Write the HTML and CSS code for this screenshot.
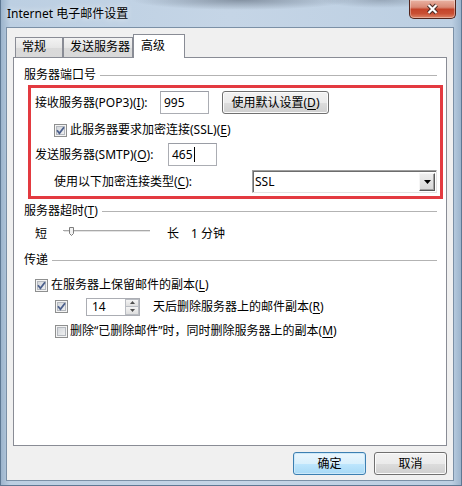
FILE: index.html
```html
<!DOCTYPE html>
<html lang="zh-CN">
<head>
    <meta charset="UTF-8">
    <title>Internet 电子邮件设置</title>
    <link rel="stylesheet" href="styles.css">
</head>
<body>
<div class="window">
    <div class="titlebar">
        <span class="title">Internet 电子邮件设置</span>
        <div class="close">
            <svg width="13" height="12" viewBox="0 0 13 12">
                <path d="M2.5 2 L10.5 10 M10.5 2 L2.5 10" stroke="#4a2b25" stroke-width="4.2"/>
                <path d="M2.5 2 L10.5 10 M10.5 2 L2.5 10" stroke="#fff" stroke-width="2.2"/>
            </svg>
        </div>
    </div>
    <div class="client">
        <ul class="tabs">
            <li class="tab-general">常规</li>
            <li class="tab-send">发送服务器</li>
            <li class="tab-adv active">高级</li>
        </ul>
        <div class="panel">
            <div class="group g-port"><span>服务器端口号</span></div>
            <div class="mark">
                <div class="row row-pop">
                    <span class="label w-pop">接收服务器(POP3)(<u>I</u>):</span>
                    <span class="edit">995</span>
                    <span class="button btn-reset">使用默认设置(<u>D</u>)</span>
                </div>
                <div class="row row-ssl">
                    <span class="check"><svg width="9" height="9" viewBox="0 0 9 9"><path d="M1 4.3 L3.4 7.2 L8 1.2" fill="none" stroke="#4b5f8c" stroke-width="1.8"/></svg></span>
                    <span class="check-text">此服务器要求加密连接(SSL)(<u>E</u>)</span>
                </div>
                <div class="row row-smtp">
                    <span class="label w-smtp">发送服务器(SMTP)(<u>O</u>):</span>
                    <span class="edit">465<i class="caret"></i></span>
                </div>
                <div class="row row-type">
                    <span class="label w-type">使用以下加密连接类型(<u>C</u>):</span>
                    <span class="combo">
                        <span>SSL</span>
                        <span class="drop"><svg width="7" height="4" viewBox="0 0 7 4"><path d="M0 0 H7 L3.5 4 Z" fill="#000"/></svg></span>
                    </span>
                </div>
            </div>
            <div class="group g-timeout"><span>服务器超时(<u>T</u>)</span></div>
            <div class="row row-slider">
                <span>短</span>
                <svg class="slider" width="88" height="16" viewBox="0 0 88 16">
                    <line x1="0" y1="4.5" x2="87" y2="4.5" stroke="#a9a9a9"/>
                    <line x1="1" y1="5.5" x2="87" y2="5.5" stroke="#e3e3e3"/>
                    <path d="M6.5 1.5 H10.5 V7.5 L8.5 9.5 L6.5 7.5 Z" fill="#f2f2f2" stroke="#7d7d7d"/>
                </svg>
                <span class="long">长</span>
                <span class="minutes">1 分钟</span>
            </div>
            <div class="group g-deliver"><span>传递</span></div>
            <div class="row row-keep">
                <span class="check"><svg width="9" height="9" viewBox="0 0 9 9"><path d="M1 4.3 L3.4 7.2 L8 1.2" fill="none" stroke="#4b5f8c" stroke-width="1.8"/></svg></span>
                <span class="check-text">在服务器上保留邮件的副本(<u>L</u>)</span>
            </div>
            <div class="row row-days">
                <span class="check"><svg width="9" height="9" viewBox="0 0 9 9"><path d="M1 4.3 L3.4 7.2 L8 1.2" fill="none" stroke="#4b5f8c" stroke-width="1.8"/></svg></span>
                <span class="spin">
                    <span class="spin-val">14</span>
                    <span class="spin-btns">
                        <span class="spin-up"><svg width="5" height="3" viewBox="0 0 5 3"><path d="M0 3 H5 L2.5 0 Z" fill="#4d4d4d"/></svg></span>
                        <span class="spin-down"><svg width="5" height="3" viewBox="0 0 5 3"><path d="M0 0 H5 L2.5 3 Z" fill="#4d4d4d"/></svg></span>
                    </span>
                </span>
                <span class="days-text">天后删除服务器上的邮件副本(<u>R</u>)</span>
            </div>
            <div class="row row-del">
                <span class="check"></span>
                <span class="check-text tight">删除“已删除邮件”时，同时删除服务器上的副本(<u>M</u>)</span>
            </div>
        </div>
        <div class="footer">
            <span class="button btn-ok">确定</span>
            <span class="button btn-cancel">取消</span>
        </div>
    </div>
</div>
</body>
</html>
```

FILE: styles.css
```css
*{
    margin:0;
    padding:0;
}
body{
    font-family: "Noto Sans", "Noto Sans CJK SC", sans-serif;
    font-size:12px;
    line-height:16px;
    color:#000;
}
li{
    list-style:none;
}
u{
    text-decoration:underline;
    text-underline-offset:2px;
}

/* window frame */
.window{
    width:462px;
    height:486px;
    box-sizing:border-box;
    display:flex;
    flex-direction:column;
    border:1px solid #5e7893;
    border-top:none;
    background:linear-gradient(to right, #9cb4cc, #bccfe2 2%, #c5d5e6 50%, #bccfe2 98%, #9cb4cc);
}
.titlebar{
    height:27px;
    display:flex;
    justify-content:space-between;
    background:
        radial-gradient(ellipse 110px 10px at 240px 0, rgba(80,92,108,0.55), rgba(80,92,108,0)),
        radial-gradient(ellipse 60px 8px at 380px 0, rgba(80,92,108,0.35), rgba(80,92,108,0));
}
.title{
    padding-left:6px;
    line-height:27px;
    text-shadow:0 0 6px rgba(255,255,255,0.9);
}
.close{
    width:47px;
    height:19px;
    box-sizing:border-box;
    margin-right:5px;
    border:1px solid #52241b;
    border-top:none;
    border-radius:0 0 5px 5px;
    background:linear-gradient(#eab3a3, #d98a76 40%, #c4442a 52%, #c94f33 75%, #dd8466);
    box-shadow:inset 0 0 0 1px rgba(255,255,255,0.35);
    display:flex;
    align-items:center;
    justify-content:center;
}
.client{
    flex:1;
    margin:0 7px 4px 5px;
    border:1px solid #7b90a6;
    background:#f0f0f0;
    display:flex;
    flex-direction:column;
}

/* tabs */
.tabs{
    display:flex;
    align-items:flex-end;
    height:23px;
    margin:6px 0 0 8px;
}
.tabs li{
    box-sizing:border-box;
    height:20px;
    padding-left:6px;
    line-height:18px;
    border:1px solid #898c95;
    border-bottom:none;
    background:linear-gradient(#f3f3f3, #e6e6e6 50%, #dadada 51%, #d9d9d9);
}
.tab-general{
    width:48px;
}
.tab-send{
    width:70px;
}
.tabs li.tab-adv{
    width:52px;
    height:24px;
    margin-bottom:-1px;
    padding-left:7px;
    line-height:22px;
    background:#fff;
    position:relative;
}
.panel{
    flex:1;
    margin:0 6px;
    padding:0 3px 0 10px;
    border:1px solid #898c95;
    background:#fff;
}

/* group headings */
.group{
    display:flex;
    align-items:center;
    height:16px;
    margin-right:6px;
}
.group::after{
    content:"";
    flex:1;
    height:1px;
    margin-left:4px;
    background:#b3b3b3;
}
.g-port{
    margin-top:9px;
}
.g-timeout{
    margin-top:4px;
}
.g-deliver{
    margin-top:10px;
}

/* red highlight */
.mark{
    box-sizing:border-box;
    height:114px;
    margin:2px 0 0 4px;
    padding:3px 0 0 4px;
    border:3px solid #e33a40;
}

.row{
    display:flex;
    align-items:center;
}
.label{
    flex:none;
}
.row-pop{
    height:23px;
}
.w-pop{
    width:125px;
}
.row-ssl{
    height:16px;
    margin-top:8px;
    padding-left:19px;
}
.row-smtp{
    height:23px;
    margin-top:5px;
}
.w-smtp{
    width:133px;
}
.row-type{
    height:23px;
    margin-top:4px;
    padding-left:19px;
}
.w-type{
    width:198px;
}

/* controls */
.edit{
    box-sizing:border-box;
    width:49px;
    height:23px;
    padding-left:3px;
    border:1px solid #abadb3;
    border-top-color:#9a9da5;
    background:#fff;
    display:flex;
    align-items:center;
}
.caret{
    width:1px;
    height:15px;
    margin-left:1px;
    background:#000;
}
.button{
    box-sizing:border-box;
    height:23px;
    border:1px solid #707070;
    border-radius:3px;
    background:linear-gradient(#f2f2f2, #ebebeb 50%, #dddddd 51%, #cfcfcf);
    box-shadow:inset 0 0 0 1px #fbfbfb;
    display:flex;
    align-items:center;
    justify-content:center;
}
.btn-reset{
    width:107px;
    margin-left:13px;
}
.check{
    box-sizing:border-box;
    width:13px;
    height:13px;
    flex:none;
    border:1px solid #8e8f8f;
    background:linear-gradient(135deg, #cdd1d6, #f6f6f6);
    box-shadow:inset 0 0 0 1px #f4f4f4, inset 0 0 0 2px #b4b8be;
    display:flex;
    align-items:center;
    justify-content:center;
}
.check-text{
    margin-left:3px;
}
.check-text.tight{
    margin-left:2px;
}
.combo{
    box-sizing:border-box;
    width:185px;
    height:23px;
    padding-left:2px;
    border:1px solid #a0a0a0;
    border-right-color:#e3e3e3;
    border-bottom-color:#e3e3e3;
    box-shadow:inset 1px 1px 0 #6d6d6d;
    background:#fff;
    display:flex;
    align-items:center;
    justify-content:space-between;
}
.drop{
    box-sizing:border-box;
    width:16px;
    height:18px;
    margin-right:1px;
    border:1px solid #f6f6f6;
    border-right-color:#5a5a5a;
    border-bottom-color:#5a5a5a;
    background:linear-gradient(#eeeeee, #d6d6d6);
    box-shadow:inset -1px -1px 0 #a0a0a0;
    display:flex;
    align-items:center;
    justify-content:center;
}

/* timeout */
.row-slider{
    height:16px;
    margin-top:7px;
    padding-left:11px;
}
.slider{
    margin-left:16px;
}
.long{
    margin-left:16px;
}
.minutes{
    margin-left:12px;
}

/* delivery */
.row-keep{
    height:16px;
    margin-top:9px;
    padding-left:11px;
}
.row-days{
    height:19px;
    margin-top:4px;
    padding-left:31px;
}
.spin{
    box-sizing:border-box;
    width:54px;
    height:18px;
    margin-left:18px;
    border:1px solid #abadb3;
    background:#fff;
    display:flex;
}
.spin-val{
    flex:1;
    padding-left:5px;
    line-height:16px;
}
.spin-btns{
    width:14px;
    display:flex;
    flex-direction:column;
}
.spin-up, .spin-down{
    flex:1;
    box-sizing:border-box;
    border:1px solid #b9bcc2;
    background:linear-gradient(#f4f4f4, #dedede);
    display:flex;
    align-items:center;
    justify-content:center;
}
.spin-down{
    border-top:none;
}
.days-text{
    margin-left:13px;
}
.row-del{
    height:16px;
    margin-top:7px;
    padding-left:31px;
}

/* footer */
.footer{
    height:34px;
    box-sizing:border-box;
    padding:6px 6px 5px 0;
    display:flex;
    justify-content:flex-end;
}
.footer .button{
    width:73px;
}
.btn-cancel{
    margin-left:8px;
}
.btn-ok{
    border-color:#3c7fb1;
    background:linear-gradient(#eaf6fd, #d9f0fc 50%, #bee6fd 51%, #a7d9f5);
    box-shadow:inset 0 0 0 1px #cbe8f9;
}
```
